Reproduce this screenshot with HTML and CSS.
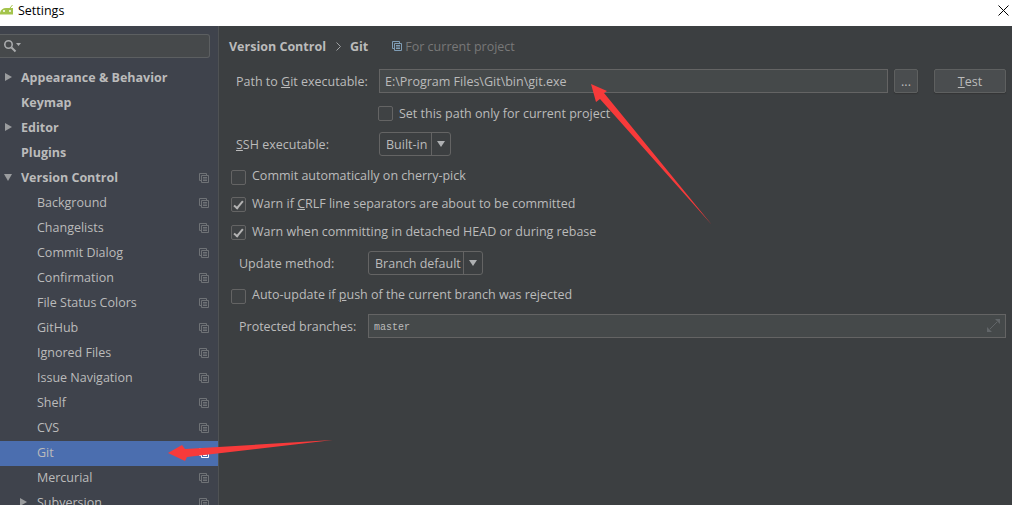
FILE: index.html
```html
<!DOCTYPE html>
<html lang="en">
<head>
  <meta charset="UTF-8">
  <meta name="viewport" content="width=device-width, initial-scale=1.0">
  <title>Settings</title>
  <link rel="stylesheet" href="styles.css">
</head>
<body>
  <svg class="defs" width="0" height="0">
    <symbol id="copy" viewBox="0 0 10 10">
      <path d="M2.500 7.500H.5V.5h7v2" fill="none" stroke="currentColor"/>
      <path d="M2.500 2.500h7v7h-7z" fill="none" stroke="currentColor"/>
      <path d="M4 4.500h4M4 6h4M4 7.500h4" stroke="currentColor"/>
    </symbol>
  </svg>

  <div class="window">
    <!-- Title bar -->
    <div class="titlebar">
      <svg class="app-icon" width="13" height="10" viewBox="0 0 13 10">
        <path d="M0 9.500V7.500C1 4.500 3 3 6 3h7v6.500z" fill="#a4c44c"/>
        <path d="M10 3l2.500-3" stroke="#a4c44c" fill="none"/>
        <circle cx="4" cy="6" r="1" fill="#fff"/>
        <circle cx="10" cy="6" r="1" fill="#fff"/>
      </svg>
      <span class="title">Settings</span>
      <svg class="close" width="11" height="11" viewBox="0 0 11 11">
        <path d="M.5.5l10 10M10.500.5l-10 10" stroke="#000" fill="none"/>
      </svg>
    </div>

    <div class="content">
      <!-- Sidebar -->
      <div class="sidebar">
        <div class="search">
          <svg width="18" height="14" viewBox="0 0 18 14">
            <circle cx="5.500" cy="5.500" r="3.700" fill="none" stroke="#a9abad" stroke-width="1.600"/>
            <path d="M8.500 8.500l4 4" stroke="#a9abad" stroke-width="2"/>
            <path d="M13 4h5l-2.500 3z" fill="#a9abad"/>
          </svg>
        </div>
        <div class="tree">
          <div class="row top"><i class="arrow"></i><span>Appearance &amp; Behavior</span></div>
          <div class="row top"><span>Keymap</span></div>
          <div class="row top"><i class="arrow"></i><span>Editor</span></div>
          <div class="row top"><span>Plugins</span></div>
          <div class="row top"><i class="arrow open"></i><span>Version Control</span><svg class="copy"><use href="#copy"/></svg></div>
          <div class="row sub"><span>Background</span><svg class="copy"><use href="#copy"/></svg></div>
          <div class="row sub"><span>Changelists</span><svg class="copy"><use href="#copy"/></svg></div>
          <div class="row sub"><span>Commit Dialog</span><svg class="copy"><use href="#copy"/></svg></div>
          <div class="row sub"><span>Confirmation</span><svg class="copy"><use href="#copy"/></svg></div>
          <div class="row sub"><span>File Status Colors</span><svg class="copy"><use href="#copy"/></svg></div>
          <div class="row sub"><span>GitHub</span><svg class="copy"><use href="#copy"/></svg></div>
          <div class="row sub"><span>Ignored Files</span><svg class="copy"><use href="#copy"/></svg></div>
          <div class="row sub"><span>Issue Navigation</span><svg class="copy"><use href="#copy"/></svg></div>
          <div class="row sub"><span>Shelf</span><svg class="copy"><use href="#copy"/></svg></div>
          <div class="row sub"><span>CVS</span><svg class="copy"><use href="#copy"/></svg></div>
          <div class="row sub selected"><span>Git</span><svg class="copy"><use href="#copy"/></svg></div>
          <div class="row sub"><span>Mercurial</span><svg class="copy"><use href="#copy"/></svg></div>
          <div class="row sub"><i class="arrow small"></i><span>Subversion</span><svg class="copy"><use href="#copy"/></svg></div>
        </div>
      </div>

      <!-- Git settings -->
      <div class="main">
        <div class="breadcrumb">
          <b>Version Control</b>
          <svg class="crumb-sep" width="5" height="9" viewBox="0 0 5 9"><path d="M.5.5l4 4-4 4" fill="none" stroke="#a0a2a4"/></svg>
          <b>Git</b>
          <svg class="project-icon" width="10" height="10"><use href="#copy"/></svg>
          <span class="muted">For current project</span>
        </div>

        <div class="line path-line">
          <label class="lbl path-lbl">Path to <u>G</u>it executable:</label>
          <div class="field path-field">E:\Program Files\Git\bin\git.exe</div>
          <div class="btn dots">...</div>
          <div class="btn test"><u>T</u>est</div>
        </div>

        <div class="line project-line"><i class="check"></i><span>Set this path only for current project</span></div>

        <div class="line ssh-line">
          <label class="lbl path-lbl"><u>S</u>SH executable:</label>
          <div class="combo"><span class="combo-val ssh-val">Built-in</span><span class="combo-btn"><i></i></span></div>
        </div>

        <div class="line opt gap-8"><i class="check"></i><span>Commit automatically on cherry-pick</span></div>
        <div class="line opt warn gap-3"><i class="check on"></i><span>Warn if <u>C</u>RLF line separators are about to be committed</span></div>
        <div class="line opt warn gap-4"><i class="check on"></i><span>Warn when committing in detached HEAD or during rebase</span></div>

        <div class="line gap-8">
          <label class="lbl short-lbl">Update method:</label>
          <div class="combo"><span class="combo-val update-val">Branch default</span><span class="combo-btn"><i></i></span></div>
        </div>

        <div class="line opt gap-8"><i class="check"></i><span>Auto-update if <u>p</u>ush of the current branch was rejected</span></div>

        <div class="line gap-7">
          <label class="lbl short-lbl">Protected branches:</label>
          <div class="field branches">
            <span class="mono">master</span>
            <svg class="expand" width="13" height="13" viewBox="0 0 13 13">
              <path d="M8 0h5v5zM0 13V8l5 5z" fill="#616568"/>
              <path d="M3 10l7-7" stroke="#616568"/>
            </svg>
          </div>
        </div>
      </div>
    </div>
  </div>

  <!-- Red annotation arrows -->
  <svg class="marks" width="1012" height="505" viewBox="0 0 1012 505">
    <path d="M591 84L607 91 604 93 712 225 600 99 596 102z" fill="#f73a3a"/>
    <path d="M168 453L182 445 185 449 333 440 187 457 185 461z" fill="#f73a3a"/>
  </svg>
</body>
</html>
```

FILE: styles.css
```css
html, body {
  margin: 0;
  padding: 0;
  height: 100%;
  overflow: hidden;
}

body {
  position: relative;
  font-family: "Open Sans", "Noto Sans", sans-serif;
  font-size: 12.5px;
  color: #bbbbbb;
  background: #3c3f41;
}

.defs {
  position: absolute;
}

.window {
  display: flex;
  flex-direction: column;
  height: 505px;
}

.titlebar {
  display: flex;
  align-items: center;
  flex: 0 0 26px;
  background: #ffffff;
  color: #000;
}

.app-icon {
  margin-right: 5px;
  margin-top: -6px;
}

.title {
  margin-top: -5px;
}

.close {
  margin-left: auto;
  margin-right: 3px;
  margin-top: -5px;
}

.content {
  display: flex;
  flex: 1;
  min-height: 0;
}

/* sidebar */
.sidebar {
  flex: 0 0 218px;
  background: #3f434c;
  border-right: 1px solid #4f5254;
  overflow: hidden;
}

.search {
  display: flex;
  align-items: center;
  box-sizing: border-box;
  height: 24px;
  width: 210px;
  margin-top: 8px;
  padding-left: 3px;
  background: #46494b;
  border: 1px solid #5c5f61;
  border-left: none;
  border-radius: 0 3px 3px 0;
}

.tree {
  margin-top: 8px;
}

.row {
  position: relative;
  display: flex;
  align-items: center;
  height: 25px;
  padding-bottom: 3px;
  box-sizing: border-box;
}

.row.top {
  padding-left: 21px;
  font-weight: 700;
}

.row.sub {
  padding-left: 37px;
}

.row.selected {
  background: #4b6eaf;
}

.row.selected .copy {
  color: #ffffff;
}

.arrow {
  position: absolute;
  left: 5px;
  top: 7px;
  width: 0;
  height: 0;
  border-left: 7px solid #9a9c9e;
  border-top: 4px solid transparent;
  border-bottom: 4px solid transparent;
}

.arrow.open {
  left: 4px;
  top: 8px;
  border-top: 7px solid #9a9c9e;
  border-left: 4px solid transparent;
  border-right: 4px solid transparent;
  border-bottom: none;
}

.arrow.small {
  left: 20px;
}

.copy {
  position: absolute;
  left: 199px;
  top: 7px;
  width: 10px;
  height: 10px;
  color: #6f7276;
}

/* right panel */
.main {
  flex: 1;
  min-width: 0;
  padding-left: 12px;
}

.breadcrumb {
  display: flex;
  align-items: center;
  height: 24px;
  margin-top: 8px;
  margin-left: -2px;
  box-sizing: border-box;
}

.crumb-sep {
  margin: 1px 9px 0 10px;
}

.project-icon {
  margin: 0 3px 0 24px;
  color: #7f9db5;
}

.muted {
  color: #787878;
}

.line {
  display: flex;
  align-items: center;
  height: 24px;
}

.path-line {
  margin-top: 11px;
}

.project-line {
  margin-top: 8px;
  padding-left: 147px;
}

.ssh-line {
  margin-top: 7px;
}

.gap-3 {
  margin-top: 3px;
}

.gap-4 {
  margin-top: 4px;
}

.gap-8 {
  margin-top: 8px;
}

.gap-7 {
  margin-top: 7px;
}

.lbl {
  flex: none;
}

.path-lbl {
  width: 143px;
  margin-left: 5px;
}

.short-lbl {
  width: 129px;
  margin-left: 8px;
}

.field {
  box-sizing: border-box;
  height: 24px;
  line-height: 23px;
  background: #45494a;
  border: 1px solid #646464;
  padding-left: 5px;
}

.path-field {
  width: 509px;
}

.btn {
  box-sizing: border-box;
  height: 24px;
  line-height: 24px;
  text-align: center;
  background: #4a4d4f;
  border: 1px solid #5e6060;
  border-radius: 2px;
  box-shadow: 0 1px 1px #333536;
}

.dots {
  width: 24px;
  margin-left: 6px;
}

.test {
  width: 72px;
  margin-left: 16px;
}

.check {
  position: relative;
  flex: none;
  box-sizing: border-box;
  width: 15px;
  height: 15px;
  margin-right: 6px;
  background: #3f4244;
  border: 1px solid #646464;
  border-radius: 2px;
}

.check.on::after {
  content: "";
  position: absolute;
  left: 4px;
  top: 1px;
  width: 3px;
  height: 8px;
  border-right: 2px solid #b4b4b4;
  border-bottom: 2px solid #b4b4b4;
  transform: rotate(40deg);
}

.opt .check {
  margin-top: 2px;
}

.opt span {
  margin-top: -1px;
}

.opt.warn span,
.project-line span {
  margin-top: 1px;
}

.combo {
  display: flex;
  box-sizing: border-box;
  height: 24px;
  line-height: 24px;
  border: 1px solid #646464;
  border-radius: 3px;
  background: #3c3f41;
  white-space: nowrap;
}

.combo-val {
  padding-left: 6px;
}

.ssh-val {
  width: 45px;
}

.update-val {
  width: 88px;
}

.combo-btn {
  display: flex;
  align-items: center;
  justify-content: center;
  width: 18px;
  border-left: 1px solid #646464;
}

.combo-btn i {
  width: 0;
  height: 0;
  border-top: 6px solid #aeb0b2;
  border-left: 4px solid transparent;
  border-right: 4px solid transparent;
}

.branches {
  position: relative;
  width: 638px;
  line-height: 21px;
}

.mono {
  font-family: "Liberation Mono", monospace;
  font-size: 10px;
}

.expand {
  position: absolute;
  right: 5px;
  top: 4px;
}

.marks {
  position: absolute;
  left: 0;
  top: 0;
}
```
